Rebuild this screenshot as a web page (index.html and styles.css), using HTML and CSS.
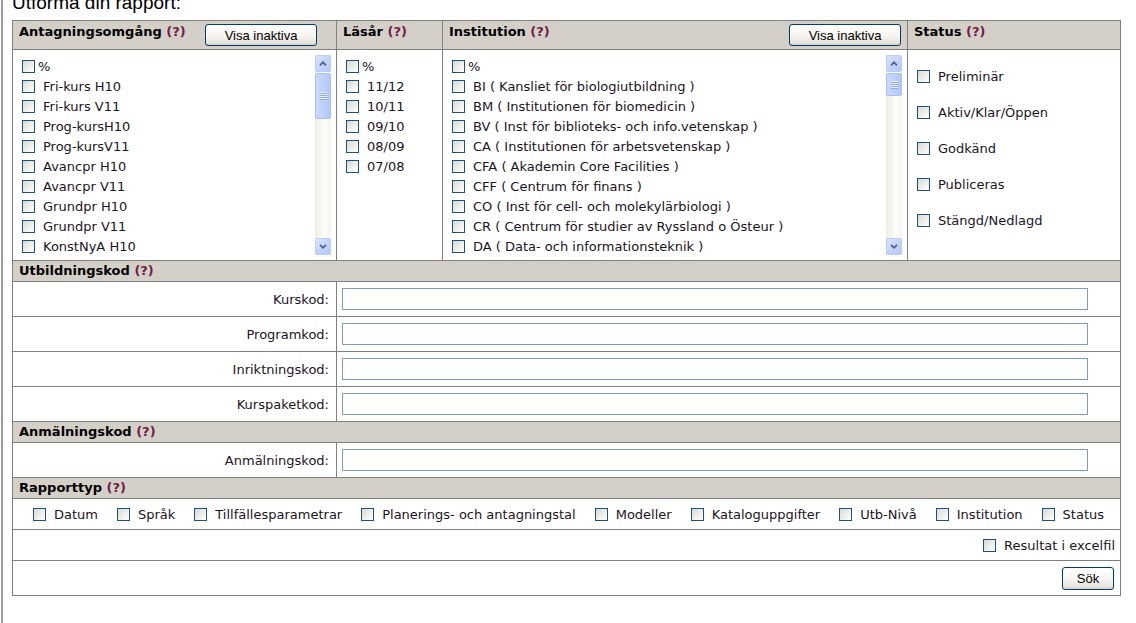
FILE: index.html
```html
<!DOCTYPE html>
<html lang="sv">
<head>
<meta charset="utf-8">
<title>Utforma din rapport</title>
<link rel="stylesheet" href="styles.css">
</head>
<body>
<div class="page">
  <div class="title">Utforma din rapport:</div>
  <div class="form">
    <div class="top">
      <div class="hd"><span class="ht">Antagningsomgång <span class="q">(?)</span></span><button class="btn b1">Visa inaktiva</button></div>
      <div class="hd"><span class="ht">Läsår <span class="q">(?)</span></span></div>
      <div class="hd"><span class="ht">Institution <span class="q">(?)</span></span><button class="btn b3">Visa inaktiva</button></div>
      <div class="hd last"><span class="ht">Status <span class="q">(?)</span></span></div>

      <div class="bd">
        <div class="lbox">
          <div class="items">
            <label class="it"><input type="checkbox" class="cb"><span>%</span></label>
            <label class="it"><input type="checkbox" class="cb"><span class="sp">Fri-kurs H10</span></label>
            <label class="it"><input type="checkbox" class="cb"><span class="sp">Fri-kurs V11</span></label>
            <label class="it"><input type="checkbox" class="cb"><span class="sp">Prog-kursH10</span></label>
            <label class="it"><input type="checkbox" class="cb"><span class="sp">Prog-kursV11</span></label>
            <label class="it"><input type="checkbox" class="cb"><span class="sp">Avancpr H10</span></label>
            <label class="it"><input type="checkbox" class="cb"><span class="sp">Avancpr V11</span></label>
            <label class="it"><input type="checkbox" class="cb"><span class="sp">Grundpr H10</span></label>
            <label class="it"><input type="checkbox" class="cb"><span class="sp">Grundpr V11</span></label>
            <label class="it"><input type="checkbox" class="cb"><span class="sp">KonstNyA H10</span></label>
            <label class="it"><input type="checkbox" class="cb"><span class="sp">KonstNyA V11</span></label>
            <label class="it"><input type="checkbox" class="cb"><span class="sp">Senanm H10</span></label>
          </div>
          <div class="sb">
            <div class="sbb"><svg width="8" height="5" viewBox="0 0 8 5"><path d="M1 4.3 L4 1.3 L7 4.3" fill="none" stroke="#4d6185" stroke-width="1.7"/></svg></div>
            <div class="trk"><div class="thumb t1"><span class="grip"></span></div></div>
            <div class="sbb"><svg width="8" height="5" viewBox="0 0 8 5"><path d="M1 0.8 L4 3.8 L7 0.8" fill="none" stroke="#4d6185" stroke-width="1.7"/></svg></div>
          </div>
        </div>
      </div>

      <div class="bd">
        <div class="items">
          <label class="it"><input type="checkbox" class="cb"><span>%</span></label>
          <label class="it"><input type="checkbox" class="cb"><span class="sp">11/12</span></label>
          <label class="it"><input type="checkbox" class="cb"><span class="sp">10/11</span></label>
          <label class="it"><input type="checkbox" class="cb"><span class="sp">09/10</span></label>
          <label class="it"><input type="checkbox" class="cb"><span class="sp">08/09</span></label>
          <label class="it"><input type="checkbox" class="cb"><span class="sp">07/08</span></label>
        </div>
      </div>

      <div class="bd">
        <div class="lbox">
          <div class="items">
            <label class="it"><input type="checkbox" class="cb"><span>%</span></label>
            <label class="it"><input type="checkbox" class="cb"><span class="sp">BI ( Kansliet för biologiutbildning )</span></label>
            <label class="it"><input type="checkbox" class="cb"><span class="sp">BM ( Institutionen för biomedicin )</span></label>
            <label class="it"><input type="checkbox" class="cb"><span class="sp">BV ( Inst för biblioteks- och info.vetenskap )</span></label>
            <label class="it"><input type="checkbox" class="cb"><span class="sp">CA ( Institutionen för arbetsvetenskap )</span></label>
            <label class="it"><input type="checkbox" class="cb"><span class="sp">CFA ( Akademin Core Facilities )</span></label>
            <label class="it"><input type="checkbox" class="cb"><span class="sp">CFF ( Centrum för finans )</span></label>
            <label class="it"><input type="checkbox" class="cb"><span class="sp">CO ( Inst för cell- och molekylärbiologi )</span></label>
            <label class="it"><input type="checkbox" class="cb"><span class="sp">CR ( Centrum för studier av Ryssland o Östeur )</span></label>
            <label class="it"><input type="checkbox" class="cb"><span class="sp">DA ( Data- och informationsteknik )</span></label>
            <label class="it"><input type="checkbox" class="cb"><span class="sp">DE ( Data- och elektroteknik )</span></label>
          </div>
          <div class="sb">
            <div class="sbb"><svg width="8" height="5" viewBox="0 0 8 5"><path d="M1 4.3 L4 1.3 L7 4.3" fill="none" stroke="#4d6185" stroke-width="1.7"/></svg></div>
            <div class="trk"><div class="thumb t3"><span class="grip"></span></div></div>
            <div class="sbb"><svg width="8" height="5" viewBox="0 0 8 5"><path d="M1 0.8 L4 3.8 L7 0.8" fill="none" stroke="#4d6185" stroke-width="1.7"/></svg></div>
          </div>
        </div>
      </div>

      <div class="bd last">
        <div class="st">
          <label class="it"><input type="checkbox" class="cb"><span class="sp">Preliminär</span></label>
          <label class="it"><input type="checkbox" class="cb"><span class="sp">Aktiv/Klar/Öppen</span></label>
          <label class="it"><input type="checkbox" class="cb"><span class="sp">Godkänd</span></label>
          <label class="it"><input type="checkbox" class="cb"><span class="sp">Publiceras</span></label>
          <label class="it"><input type="checkbox" class="cb"><span class="sp">Stängd/Nedlagd</span></label>
        </div>
      </div>
    </div>

    <div class="sh">Utbildningskod <span class="q">(?)</span></div>
    <div class="frow"><div class="lbl">Kurskod:</div><div class="inp"><input type="text" class="tx"></div></div>
    <div class="frow"><div class="lbl">Programkod:</div><div class="inp"><input type="text" class="tx"></div></div>
    <div class="frow"><div class="lbl">Inriktningskod:</div><div class="inp"><input type="text" class="tx"></div></div>
    <div class="frow"><div class="lbl">Kurspaketkod:</div><div class="inp"><input type="text" class="tx"></div></div>

    <div class="sh">Anmälningskod <span class="q">(?)</span></div>
    <div class="frow"><div class="lbl">Anmälningskod:</div><div class="inp"><input type="text" class="tx"></div></div>

    <div class="sh">Rapporttyp <span class="q">(?)</span></div>
    <div class="rt">
      <label class="ri"><input type="checkbox" class="cb"><span class="sp">Datum</span></label>
      <label class="ri"><input type="checkbox" class="cb"><span class="sp">Språk</span></label>
      <label class="ri"><input type="checkbox" class="cb"><span class="sp">Tillfällesparametrar</span></label>
      <label class="ri"><input type="checkbox" class="cb"><span class="sp">Planerings- och antagningstal</span></label>
      <label class="ri"><input type="checkbox" class="cb"><span class="sp">Modeller</span></label>
      <label class="ri"><input type="checkbox" class="cb"><span class="sp">Kataloguppgifter</span></label>
      <label class="ri"><input type="checkbox" class="cb"><span class="sp">Utb-Nivå</span></label>
      <label class="ri"><input type="checkbox" class="cb"><span class="sp">Institution</span></label>
      <label class="ri"><input type="checkbox" class="cb"><span class="sp">Status</span></label>
    </div>
    <div class="res">
      <label class="ri"><input type="checkbox" class="cb"><span class="sp">Resultat i excelfil</span></label>
    </div>
    <div class="sok"><button class="btn bs">Sök</button></div>
  </div>
</div>
</body>
</html>
```

FILE: styles.css
```css
* { box-sizing: border-box; }
html, body { margin: 0; padding: 0; background: #fff; }
body {
  font-family: "DejaVu Sans", Verdana, sans-serif;
  font-size: 13px;
  color: #1c1424;
}
.page {
  display: flow-root;
  margin-left: 1px;
  border-left: 2px solid #9c9c9c;
  padding-left: 9px;
  min-height: 623px;
}
.title {
  font-family: "Liberation Sans", Arial, sans-serif;
  font-size: 19px;
  line-height: 19px;
  height: 19px;
  margin: -7px 0 8px;
  color: #000;
}
.form {
  width: 1109px;
  border: 1px solid #808080;
}
.q { color: #701c48; }

.top {
  display: grid;
  grid-template-columns: 324px 106px 465px 1fr;
  grid-template-rows: 29px 211px;
}
.hd {
  background: #d4d0c8;
  border-right: 1px solid #808080;
  border-bottom: 1px solid #808080;
  display: flex;
  align-items: flex-start;
  padding: 3px 6px 0;
}
.hd.last, .bd.last { border-right: 0; }
.ht {
  font-weight: bold;
  line-height: 16px;
  color: #000;
  white-space: nowrap;
}
.btn {
  font-family: "Liberation Sans", Arial, sans-serif;
  font-size: 13px;
  color: #000;
  height: 22px;
  padding: 0;
  border: 1px solid #003c74;
  border-radius: 3px;
  background: linear-gradient(#ffffff 0%, #f6f5f1 55%, #e6e3da 90%, #d6d0c5 100%);
}
.b1 { width: 112px; margin-left: auto; margin-right: 13px; }
.b3 { width: 112px; margin-left: auto; }
.bs { width: 52px; height: 23px; }

.bd {
  border-right: 1px solid #808080;
  border-bottom: 1px solid #808080;
  padding: 5px 5px 0 9px;
}
.lbox { display: flex; height: 200px; }
.items { flex: 1; overflow: hidden; padding-top: 1px; min-width: 0; }
.it {
  height: 20px;
  display: flex;
  align-items: center;
  white-space: nowrap;
}
.cb {
  -webkit-appearance: none;
  appearance: none;
  flex: none;
  width: 13px;
  height: 13px;
  margin: 0 3px 0 0;
  border: 1px solid #1c5180;
  background: linear-gradient(135deg, #d8d8d0 0%, #eeeee9 50%, #fdfdfc 100%);
}
.sp { padding-left: 5px; }

/* scrollbar */
.sb {
  width: 16px;
  flex: none;
  display: flex;
  flex-direction: column;
  background: linear-gradient(to right, #eeede5, #fdfdfa 60%, #f4f3ee);
}
.sbb {
  height: 17px;
  flex: none;
  display: flex;
  align-items: center;
  justify-content: center;
  border: 1px solid #b9cdf7;
  border-radius: 2px;
  background: linear-gradient(135deg, #dbe6fd 0%, #c3d4fc 50%, #b4c9f8 100%);
}
.trk { flex: 1; }
.thumb {
  margin-top: 1px;
  border: 1px solid #a9c0f2;
  border-radius: 2px;
  background: linear-gradient(to right, #c9d8fd, #bccffb 60%, #b1c7f8);
  display: flex;
  align-items: center;
  justify-content: center;
}
.t1 { height: 46px; }
.t3 { height: 23px; }
.grip {
  width: 7px;
  height: 8px;
  background: repeating-linear-gradient(#eef3fe 0, #eef3fe 1px, #8aa9ea 1px, #8aa9ea 2px);
}

.st { padding-top: 3px; }
.st .it { height: 36px; }

.sh {
  background: #d4d0c8;
  border-bottom: 1px solid #808080;
  height: 21px;
  line-height: 20px;
  padding-left: 6px;
  font-weight: bold;
  color: #000;
}
.frow {
  display: grid;
  grid-template-columns: 324px 1fr;
  height: 35px;
  border-bottom: 1px solid #808080;
}
.lbl {
  border-right: 1px solid #808080;
  display: flex;
  align-items: center;
  justify-content: flex-end;
  padding-right: 7px;
}
.inp { padding: 6px 0 0 5px; }
.tx {
  display: block;
  width: 746px;
  height: 22px;
  margin: 0;
  border: 1px solid #7f9db9;
  background: #fff;
}
.rt {
  height: 31px;
  border-bottom: 1px solid #808080;
  display: flex;
  align-items: center;
  gap: 19px;
  padding-left: 20px;
  white-space: nowrap;
}
.ri { display: flex; align-items: center; }
.res {
  height: 31px;
  border-bottom: 1px solid #808080;
  display: flex;
  align-items: center;
  justify-content: flex-end;
  padding-right: 5px;
}
.sok {
  height: 34px;
  display: flex;
  align-items: center;
  justify-content: flex-end;
  padding-right: 6px;
}
```
